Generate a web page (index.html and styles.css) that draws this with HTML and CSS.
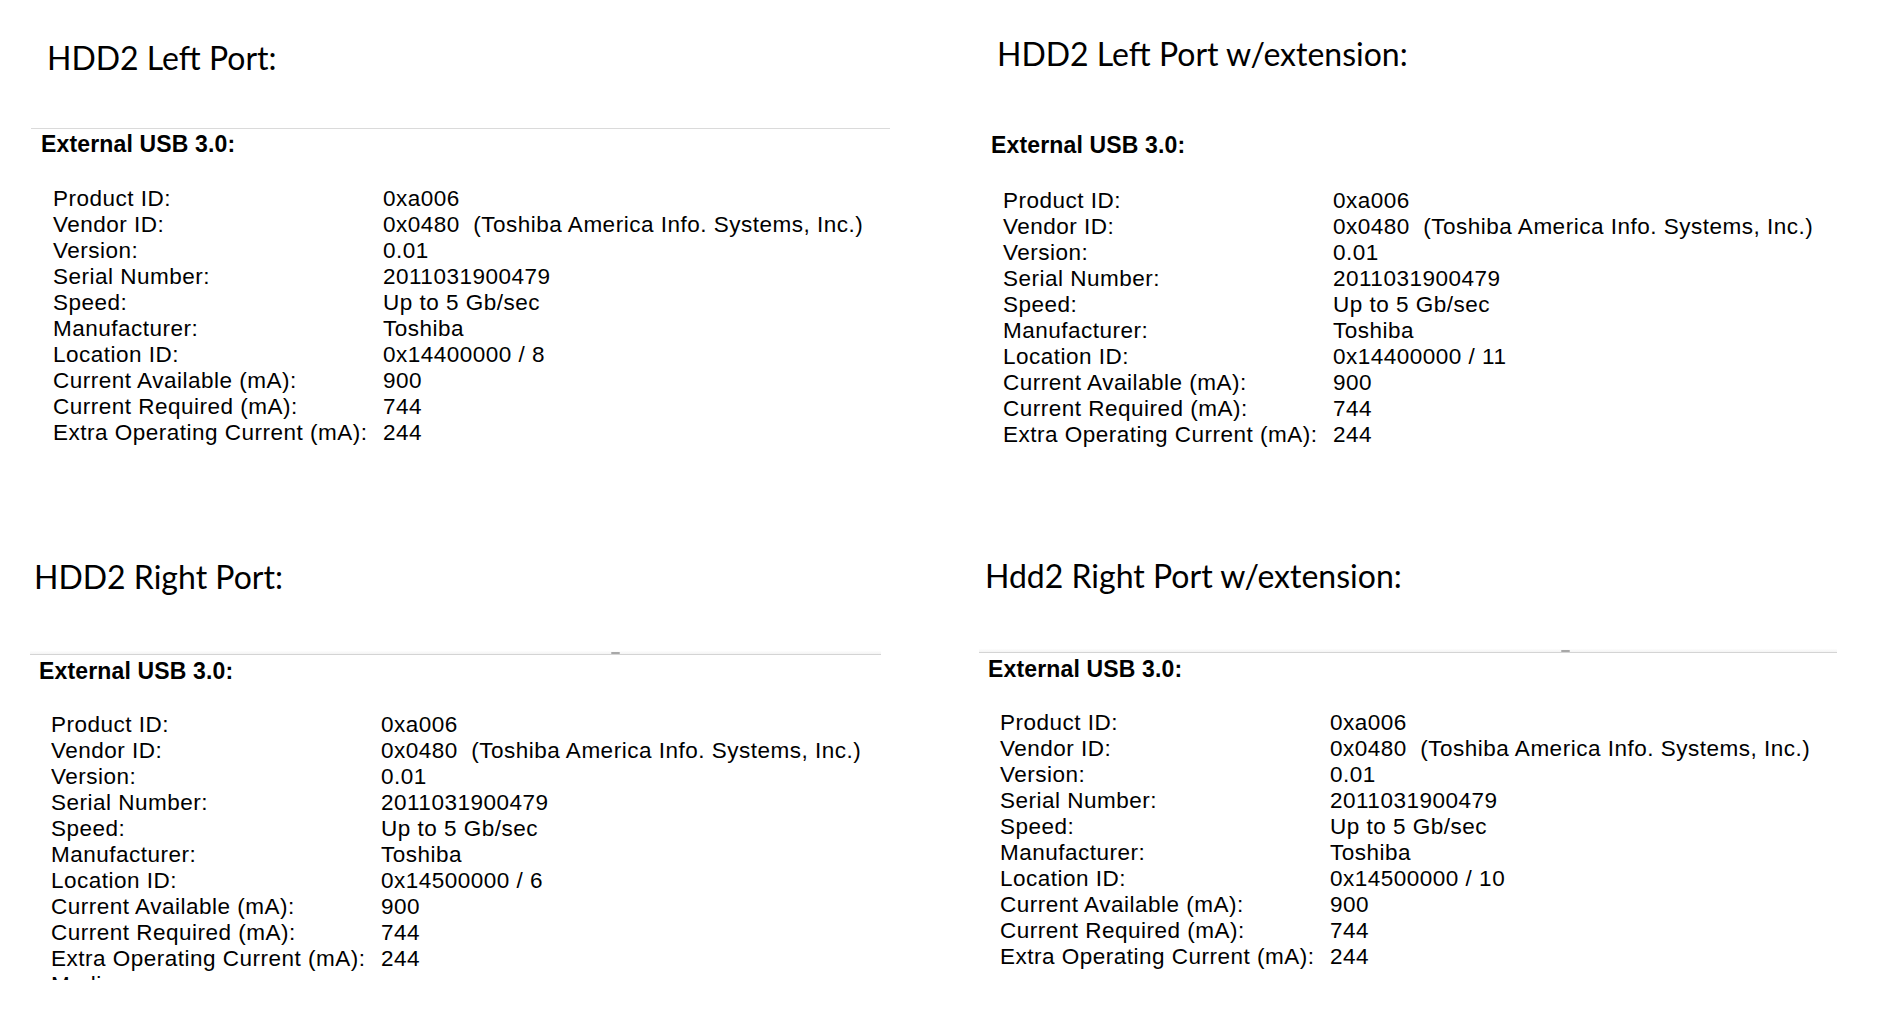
FILE: index.html
```html
<!DOCTYPE html>
<html>
<head>
<meta charset="utf-8">
<title>HDD2 USB ports</title>
<link rel="stylesheet" href="styles.css">
</head>
<body>
<div class="sheet">
  <section class="panel panel-tl">
    <h2 class="title">HDD2 Left Port:</h2>
    <div class="rule"></div>
    <h3 class="section-head">External USB 3.0:</h3>
    <div class="props">
      <span>Product ID:</span><span>0xa006</span>
      <span>Vendor ID:</span><span>0x0480  (Toshiba America Info. Systems, Inc.)</span>
      <span>Version:</span><span>0.01</span>
      <span>Serial Number:</span><span>2011031900479</span>
      <span>Speed:</span><span>Up to 5 Gb/sec</span>
      <span>Manufacturer:</span><span>Toshiba</span>
      <span>Location ID:</span><span>0x14400000 / 8</span>
      <span>Current Available (mA):</span><span>900</span>
      <span>Current Required (mA):</span><span>744</span>
      <span>Extra Operating Current (mA):</span><span>244</span>
    </div>
  </section>

  <section class="panel panel-tr">
    <h2 class="title">HDD2 Left Port w/extension:</h2>
    <h3 class="section-head">External USB 3.0:</h3>
    <div class="props">
      <span>Product ID:</span><span>0xa006</span>
      <span>Vendor ID:</span><span>0x0480  (Toshiba America Info. Systems, Inc.)</span>
      <span>Version:</span><span>0.01</span>
      <span>Serial Number:</span><span>2011031900479</span>
      <span>Speed:</span><span>Up to 5 Gb/sec</span>
      <span>Manufacturer:</span><span>Toshiba</span>
      <span>Location ID:</span><span>0x14400000 / 11</span>
      <span>Current Available (mA):</span><span>900</span>
      <span>Current Required (mA):</span><span>744</span>
      <span>Extra Operating Current (mA):</span><span>244</span>
    </div>
  </section>

  <section class="panel panel-bl">
    <h2 class="title">HDD2 Right Port:</h2>
    <div class="splitter"><span class="grip"></span></div>
    <h3 class="section-head">External USB 3.0:</h3>
    <div class="props props-clipped">
      <span>Product ID:</span><span>0xa006</span>
      <span>Vendor ID:</span><span>0x0480  (Toshiba America Info. Systems, Inc.)</span>
      <span>Version:</span><span>0.01</span>
      <span>Serial Number:</span><span>2011031900479</span>
      <span>Speed:</span><span>Up to 5 Gb/sec</span>
      <span>Manufacturer:</span><span>Toshiba</span>
      <span>Location ID:</span><span>0x14500000 / 6</span>
      <span>Current Available (mA):</span><span>900</span>
      <span>Current Required (mA):</span><span>744</span>
      <span>Extra Operating Current (mA):</span><span>244</span>
      <span>Media:</span><span></span>
    </div>
  </section>

  <section class="panel panel-br">
    <h2 class="title">Hdd2 Right Port w/extension:</h2>
    <div class="splitter"><span class="grip"></span></div>
    <h3 class="section-head">External USB 3.0:</h3>
    <div class="props">
      <span>Product ID:</span><span>0xa006</span>
      <span>Vendor ID:</span><span>0x0480  (Toshiba America Info. Systems, Inc.)</span>
      <span>Version:</span><span>0.01</span>
      <span>Serial Number:</span><span>2011031900479</span>
      <span>Speed:</span><span>Up to 5 Gb/sec</span>
      <span>Manufacturer:</span><span>Toshiba</span>
      <span>Location ID:</span><span>0x14500000 / 10</span>
      <span>Current Available (mA):</span><span>900</span>
      <span>Current Required (mA):</span><span>744</span>
      <span>Extra Operating Current (mA):</span><span>244</span>
    </div>
  </section>
</div>
</body>
</html>
```

FILE: styles.css
```css
html, body {
  margin: 0;
  padding: 0;
  background: #ffffff;
}

.sheet {
  width: 1880px;
  height: 1032px;
  display: grid;
  grid-template-columns: 940px 940px;
  grid-template-rows: 520px 512px;
  overflow: hidden;
}

.panel {
  display: flex;
  flex-direction: column;
  align-items: flex-start;
  min-width: 0;
}

.title {
  margin: 0;
  font-family: Lato, "Open Sans", sans-serif;
  font-weight: 400;
  font-size: 32px;
  line-height: 40px;
  color: #000;
  white-space: nowrap;
}

.rule {
  height: 1px;
  background: #dadada;
}

.splitter {
  display: flex;
  height: 4px;
  background: linear-gradient(#fdfdfd, #f4f4f4);
  border-bottom: 1px solid #d4d4d4;
}

.grip {
  width: 9px;
  height: 2px;
  margin-top: 1px;
  border-radius: 1px;
  background: #a8a8a8;
}

.section-head {
  margin: 0;
  font-family: "Liberation Sans", Arial, sans-serif;
  font-weight: 700;
  font-size: 23px;
  line-height: 26px;
  letter-spacing: 0.15px;
  color: #000;
  white-space: nowrap;
}

.props {
  display: grid;
  grid-template-columns: 330px auto;
  font-family: "Liberation Sans", Arial, sans-serif;
  font-size: 22.5px;
  line-height: 26px;
  letter-spacing: 0.5px;
  color: #000;
  white-space: pre;
}

/* Top-left */
.panel-tl .title { margin: 38px 0 0 47px; }
.panel-tl .rule { margin: 50px 0 0 31px; width: 859px; }
.panel-tl .section-head { margin: 2px 0 0 41px; }
.panel-tl .props { margin: 29px 0 0 53px; }

/* Top-right */
.panel-tr .title { margin: 34px 0 0 57px; }
.panel-tr .section-head { margin: 58px 0 0 51px; }
.panel-tr .props { margin: 30px 0 0 63px; }

/* Bottom-left */
.panel-bl .title { margin: 37px 0 0 34px; }
.panel-bl .splitter { margin: 54px 0 0 30px; width: 851px; padding-left: 581px; box-sizing: border-box; }
.panel-bl .section-head { margin: 3px 0 0 39px; }
.panel-bl .props { margin: 28px 0 0 51px; }
.props-clipped { height: 268px; overflow: hidden; }

/* Bottom-right */
.panel-br .title { margin: 36px 0 0 45px; }
.panel-br .splitter { margin: 53px 0 0 39px; width: 858px; padding-left: 582px; box-sizing: border-box; }
.panel-br .section-head { margin: 3px 0 0 48px; }
.panel-br .props { margin: 28px 0 0 60px; }
```
